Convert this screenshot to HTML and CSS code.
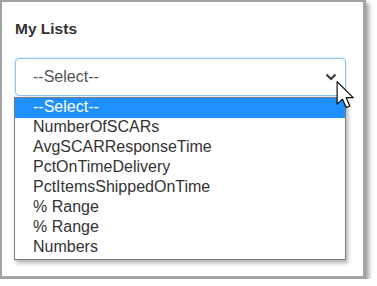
FILE: index.html
```html
<!DOCTYPE html>
<html lang="en">
<head>
    <meta charset="UTF-8">
    <meta name="viewport" content="width=device-width, initial-scale=1.0">
    <title>My Lists</title>
    <link rel="stylesheet" href="styles.css">
</head>
<body>
    <div class="frame">
        <h3 class="title">My Lists</h3>
        <div class="dropdown">
            <div class="select-box">
                <span>--Select--</span>
                <svg class="chevron" width="12" height="8" viewBox="0 0 12 8">
                    <polyline points="1.5,1.5 6,6 10.5,1.5" fill="none" stroke="#3a3a3a" stroke-width="2.2"/>
                </svg>
            </div>
            <ul class="options">
                <li class="selected">--Select--</li>
                <li>NumberOfSCARs</li>
                <li>AvgSCARResponseTime</li>
                <li>PctOnTimeDelivery</li>
                <li>PctItemsShippedOnTime</li>
                <li>% Range</li>
                <li>% Range</li>
                <li>Numbers</li>
            </ul>
            <svg class="cursor" width="19" height="28" viewBox="0 0 13 20">
                <path d="M0.5,0.5 L0.5,16.5 L4.3,12.9 L7,19 L9.6,17.9 L7,11.9 L12,11.9 Z" fill="#fff" stroke="#000" stroke-width="0.8" stroke-linejoin="round"/>
            </svg>
        </div>
    </div>
</body>
</html>
```

FILE: styles.css
```css
body {
    margin: 0;
    background-color: #fff;
    font-family: "Liberation Sans", Arial, sans-serif;
}
.frame {
    width: 366px;
    height: 279px;
    border: 2px solid #a3a3a3;
    border-right-width: 3px;
    border-bottom-width: 3px;
    background-color: #fff;
    box-shadow: 3px 3px 4px rgba(0, 0, 0, 0.35);
    padding: 18px 0 0 13px;
    box-sizing: border-box;
}
.title {
    margin: 0;
    font-size: 15.5px;
    line-height: 18px;
    font-weight: bold;
    color: #333;
}
.dropdown {
    position: relative;
    margin-top: 20px;
    width: 331px;
}
.select-box {
    display: flex;
    align-items: center;
    justify-content: space-between;
    height: 38px;
    box-sizing: border-box;
    border: 1px solid #8fc1f5;
    border-radius: 4px;
    box-shadow: 0 0 3px rgba(80, 150, 230, 0.35);
    padding: 0 8px 0 17px;
    font-size: 16px;
    line-height: 36px;
    color: #555;
}
.chevron {
    margin-top: -1px;
}
.options {
    list-style: none;
    margin: 1px 0 0 -1px;
    padding: 0 0 1px 0;
    width: 332px;
    box-sizing: border-box;
    border: 1px solid #7d7d7d;
    background-color: #fff;
    box-shadow: 2px 3px 4px rgba(0, 0, 0, 0.3);
}
.options li {
    font-size: 16px;
    line-height: 17px;
    padding: 0 0 3px 18px;
    color: #333;
}
.options li.selected {
    background-color: #1e90ff;
    color: #fff;
}
.cursor {
    position: absolute;
    left: 321px;
    top: 23px;
}
```
